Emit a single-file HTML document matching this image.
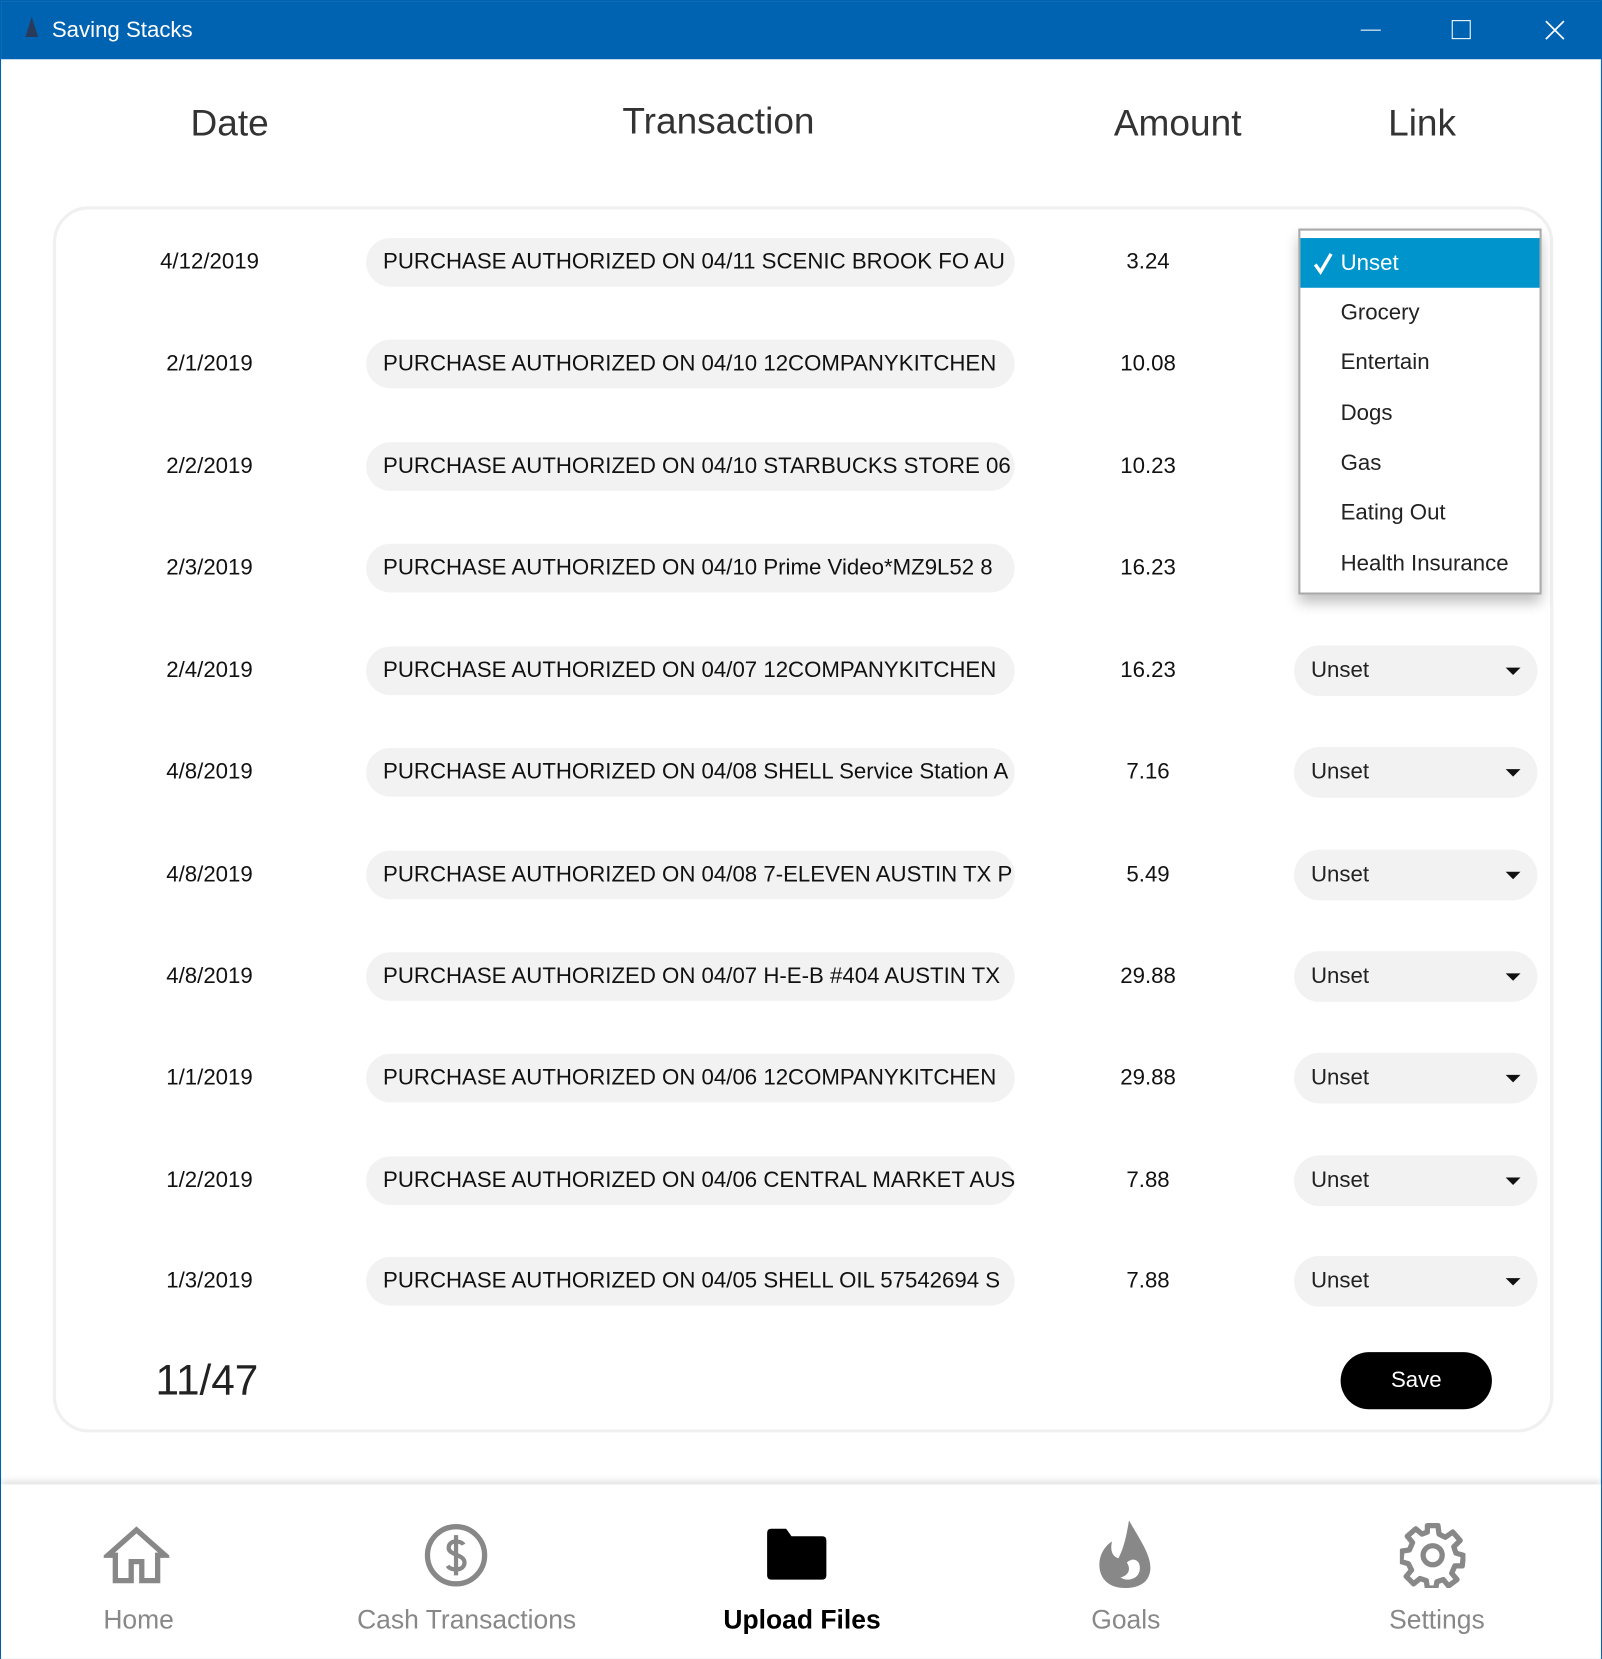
<!DOCTYPE html>
<html><head><meta charset="utf-8">
<style>
*{margin:0;padding:0;box-sizing:border-box}
html,body{width:1602px;height:1659px;overflow:hidden;background:#fff;font-family:"Liberation Sans",sans-serif}
#w{position:absolute;left:0;top:0;width:1514px;height:1568px;transform:scale(1.0581,1.0580);transform-origin:0 0;border:1px solid #0063b1;background:#fff}
.tb{position:absolute;left:0;top:0;width:1514px;height:55px;background:#0063b1;color:#fff}
.tb .t{position:absolute;left:48px;top:16px;font-size:21px}
.a{position:absolute}
.h{position:absolute;top:96px;font-size:35px;color:#333;transform:translateX(-50%)}
.card{position:absolute;left:49px;top:194px;width:1418px;height:1159px;border:3px solid #f0f0f0;border-radius:34px}
.d{position:absolute;width:200px;margin-left:-100px;text-align:center;font-size:21px;color:#111}
.p{position:absolute;left:345px;width:613px;height:46px;border-radius:23px;background:#f2f2f2;overflow:hidden;white-space:nowrap;font-size:21px;color:#111;padding-left:16px;line-height:46px;letter-spacing:0}
.am{position:absolute;width:120px;left:1024px;text-align:center;font-size:21px;color:#111}
.c{position:absolute;left:1222px;width:230px;height:48px;border-radius:24px;background:#f2f2f2;font-size:21px;color:#222;padding-left:16px;line-height:48px}
.c:after{content:"";position:absolute;right:16px;top:21px;border-left:7px solid transparent;border-right:7px solid transparent;border-top:7px solid #111}
.dd{position:absolute;left:1226px;top:215px;width:230px;height:346px;background:#fff;border:2px solid #aaa;box-shadow:0 8px 12px rgba(0,0,0,.25)}
.it{position:absolute;left:0;width:226px;height:47px;font-size:21px;color:#222;padding-left:38px;line-height:47px}
.sel{background:#0094cc;color:#fff}
.nav{position:absolute;left:0;top:1402px;width:1512px;height:165px;background:#fff;box-shadow:0 -3px 6px rgba(0,0,0,.12)}
.nl{position:absolute;top:1516px;font-size:25px;color:#888;transform:translateX(-50%);white-space:nowrap}
</style></head><body><div id="w">
<div class="tb">
<svg class="a" style="left:22px;top:14px" width="14" height="22"><path d="M7 1 L13 20 L1 20 Z" fill="#2a3a5a"/></svg>
<div class="t">Saving Stacks</div>
<div class="a" style="left:1285px;top:27px;width:19px;height:1px;background:#fff"></div>
<div class="a" style="left:1371px;top:18px;width:18px;height:18px;border:1.5px solid #fff"></div>
<svg class="a" style="left:1459px;top:18px" width="19" height="19"><path d="M1 1L18 18M18 1L1 18" stroke="#fff" stroke-width="1.6"/></svg>
</div>
<div class="h" style="left:216px">Date</div>
<div class="h" style="left:678px;top:94px">Transaction</div>
<div class="h" style="left:1112px">Amount</div>
<div class="h" style="left:1343px">Link</div>
<div class="card"></div>

<div class="d" style="left:197px;top:235px">4/12/2019</div><div class="p" style="top:224px">PURCHASE AUTHORIZED ON 04/11 SCENIC BROOK FO AU</div><div class="am" style="top:235px">3.24</div>
<div class="d" style="left:197px;top:331px">2/1/2019</div><div class="p" style="top:320px">PURCHASE AUTHORIZED ON 04/10 12COMPANYKITCHEN</div><div class="am" style="top:331px">10.08</div>
<div class="d" style="left:197px;top:428px">2/2/2019</div><div class="p" style="top:417px">PURCHASE AUTHORIZED ON 04/10 STARBUCKS STORE 06</div><div class="am" style="top:428px">10.23</div>
<div class="d" style="left:197px;top:524px">2/3/2019</div><div class="p" style="top:513px">PURCHASE AUTHORIZED ON 04/10 Prime Video*MZ9L52 8</div><div class="am" style="top:524px">16.23</div>
<div class="d" style="left:197px;top:621px">2/4/2019</div><div class="p" style="top:610px">PURCHASE AUTHORIZED ON 04/07 12COMPANYKITCHEN</div><div class="am" style="top:621px">16.23</div><div class="c" style="top:609px">Unset</div>
<div class="d" style="left:197px;top:717px">4/8/2019</div><div class="p" style="top:706px">PURCHASE AUTHORIZED ON 04/08 SHELL Service Station A</div><div class="am" style="top:717px">7.16</div><div class="c" style="top:705px">Unset</div>
<div class="d" style="left:197px;top:814px">4/8/2019</div><div class="p" style="top:803px">PURCHASE AUTHORIZED ON 04/08 7-ELEVEN AUSTIN TX P</div><div class="am" style="top:814px">5.49</div><div class="c" style="top:802px">Unset</div>
<div class="d" style="left:197px;top:910px">4/8/2019</div><div class="p" style="top:899px">PURCHASE AUTHORIZED ON 04/07 H-E-B #404 AUSTIN TX</div><div class="am" style="top:910px">29.88</div><div class="c" style="top:898px">Unset</div>
<div class="d" style="left:197px;top:1006px">1/1/2019</div><div class="p" style="top:995px">PURCHASE AUTHORIZED ON 04/06 12COMPANYKITCHEN</div><div class="am" style="top:1006px">29.88</div><div class="c" style="top:994px">Unset</div>
<div class="d" style="left:197px;top:1103px">1/2/2019</div><div class="p" style="top:1092px">PURCHASE AUTHORIZED ON 04/06 CENTRAL MARKET AUS</div><div class="am" style="top:1103px">7.88</div><div class="c" style="top:1091px">Unset</div>
<div class="d" style="left:197px;top:1198px">1/3/2019</div><div class="p" style="top:1187px">PURCHASE AUTHORIZED ON 04/05 SHELL OIL 57542694 S</div><div class="am" style="top:1198px">7.88</div><div class="c" style="top:1186px">Unset</div>

<div class="dd">
<div class="it sel" style="top:7px">Unset</div>
<svg class="a" style="left:12px;top:20px" width="20" height="22"><path d="M2 12 L7 19 L17 2" stroke="#fff" stroke-width="3.2" fill="none"/></svg>
<div class="it" style="top:54px">Grocery</div>
<div class="it" style="top:101px">Entertain</div>
<div class="it" style="top:149px">Dogs</div>
<div class="it" style="top:196px">Gas</div>
<div class="it" style="top:243px">Eating Out</div>
<div class="it" style="top:291px">Health Insurance</div>
</div>

<div class="a" style="left:146px;top:1282px;font-size:40px;color:#222">11/47</div>
<div class="a" style="left:1266px;top:1277px;width:143px;height:54px;border-radius:27px;background:#000;color:#fff;font-size:21px;text-align:center;line-height:54px">Save</div>

<div class="nav"></div>
<svg class="a" style="left:97px;top:1441px" width="62" height="56"><path d="M31 4 L4 28 L11 28 L11 52 L26 52 L26 34 L36 34 L36 52 L51 52 L51 28 L58 28 Z" fill="none" stroke="#888" stroke-width="5" stroke-linejoin="miter"/></svg>
<svg class="a" style="left:399px;top:1438px" width="62" height="62"><circle cx="31" cy="31" r="27" fill="none" stroke="#888" stroke-width="5"/><path d="M38 21 C36 17 24 16 24 24 C24 31 39 30 39 38 C39 46 26 46 23 41 M31 12 V50" fill="none" stroke="#888" stroke-width="4"/></svg>
<svg class="a" style="left:720px;top:1442px" width="62" height="52"><path d="M4 6 Q4 2 8 2 L22 2 L27 9 L56 9 Q60 9 60 13 L60 46 Q60 50 56 50 L8 50 Q4 50 4 46 Z" fill="#000"/></svg>
<svg class="a" style="left:1034px;top:1434px" width="56" height="68"><path d="M32 2 C42 20 54 36 52 50 C50 62 40 66 28 66 C14 66 4 58 4 44 C4 32 12 24 16 22 C14 30 16 36 22 38 C28 26 30 14 32 2 Z" fill="#888"/><path d="M30 42 C36 36 44 40 42 50 C40 58 30 60 24 56 C32 54 34 48 30 42 Z" fill="#fff"/></svg>
<svg class="a" style="left:1322px;top:1438px" width="62" height="62"><g transform="translate(31 31)"><path d="M-5 -28 L5 -28 L6 -20 L12 -17 L19 -22 L26 -14 L20 -8 L22 -2 L29 0 L28 10 L21 10 L18 17 L23 23 L15 29 L10 23 L4 25 L3 31 L-5 31 L-6 24 L-12 22 L-18 27 L-25 20 L-20 14 L-23 8 L-30 6 L-29 -4 L-22 -5 L-19 -12 L-24 -18 L-16 -25 L-10 -20 L-5 -22 Z" fill="none" stroke="#888" stroke-width="5" stroke-linejoin="round"/><circle r="9" fill="none" stroke="#888" stroke-width="5"/></g></svg>
<div class="nl" style="left:130px">Home</div>
<div class="nl" style="left:440px">Cash Transactions</div>
<div class="nl" style="left:757px;color:#000;font-weight:bold">Upload Files</div>
<div class="nl" style="left:1063px">Goals</div>
<div class="nl" style="left:1357px">Settings</div>
</div></body></html>
